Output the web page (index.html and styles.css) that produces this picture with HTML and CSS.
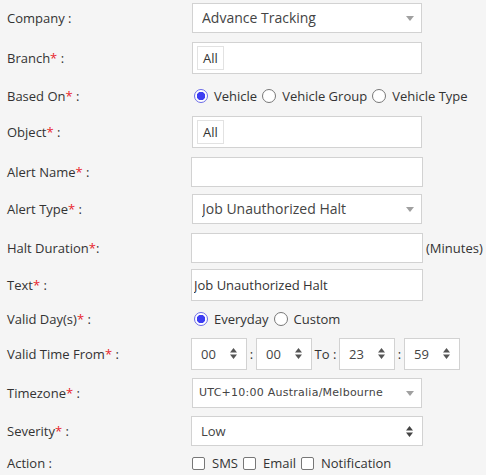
FILE: index.html
```html
<!DOCTYPE html>
<html lang="en">
<head>
    <meta charset="UTF-8">
    <meta name="viewport" content="width=device-width, initial-scale=1.0">
    <title>Alert Settings</title>
    <link rel="stylesheet" href="styles.css">
</head>
<body>

    <form class="alert-form">

        <label class="label">Company :</label>
        <div class="field">
            <span class="select">
                <select><option>Advance Tracking</option></select>
                <svg class="caret" width="8" height="5" viewBox="0 0 8 5"><path d="M0 0h8L4 5z"/></svg>
            </span>
        </div>

        <label class="label">Branch<span class="req">*</span> :</label>
        <div class="field">
            <div class="tags"><span class="tag">All</span></div>
        </div>

        <label class="label">Based On<span class="req">*</span> :</label>
        <div class="field options">
            <label><input type="radio" name="based" checked> Vehicle</label>
            <label><input type="radio" name="based"> Vehicle Group</label>
            <label><input type="radio" name="based"> Vehicle Type</label>
        </div>

        <label class="label">Object<span class="req">*</span> :</label>
        <div class="field">
            <div class="tags"><span class="tag">All</span></div>
        </div>

        <label class="label">Alert Name<span class="req">*</span> :</label>
        <div class="field">
            <input class="text" type="text">
        </div>

        <label class="label">Alert Type<span class="req">*</span> :</label>
        <div class="field">
            <span class="select">
                <select><option>Job Unauthorized Halt</option></select>
                <svg class="caret" width="8" height="5" viewBox="0 0 8 5"><path d="M0 0h8L4 5z"/></svg>
            </span>
        </div>

        <label class="label">Halt Duration<span class="req">*</span>:</label>
        <div class="field">
            <input class="text" type="text">
            <span class="unit">(Minutes)</span>
        </div>

        <label class="label">Text<span class="req">*</span> :</label>
        <div class="field">
            <input class="text plain" type="text" value="Job Unauthorized Halt">
        </div>

        <label class="label">Valid Day(s)<span class="req">*</span> :</label>
        <div class="field options">
            <label><input type="radio" name="days" checked> Everyday</label>
            <label><input type="radio" name="days"> Custom</label>
        </div>

        <label class="label">Valid Time From<span class="req">*</span> :</label>
        <div class="field time">
            <span class="spin">
                <select><option>00</option></select>
                <svg class="updown" width="7" height="11" viewBox="0 0 7 11"><path d="M0 4.5L3.5 0 7 4.5zM0 6.5h7L3.5 11z"/></svg>
            </span>
            <span class="sep">:</span>
            <span class="spin">
                <select><option>00</option></select>
                <svg class="updown" width="7" height="11" viewBox="0 0 7 11"><path d="M0 4.5L3.5 0 7 4.5zM0 6.5h7L3.5 11z"/></svg>
            </span>
            <span class="sep to">To :</span>
            <span class="spin">
                <select><option>23</option></select>
                <svg class="updown" width="7" height="11" viewBox="0 0 7 11"><path d="M0 4.5L3.5 0 7 4.5zM0 6.5h7L3.5 11z"/></svg>
            </span>
            <span class="sep">:</span>
            <span class="spin">
                <select><option>59</option></select>
                <svg class="updown" width="7" height="11" viewBox="0 0 7 11"><path d="M0 4.5L3.5 0 7 4.5zM0 6.5h7L3.5 11z"/></svg>
            </span>
        </div>

        <label class="label">Timezone<span class="req">*</span> :</label>
        <div class="field">
            <span class="select tz">
                <select><option>UTC+10:00 Australia/Melbourne</option></select>
                <svg class="caret" width="8" height="5" viewBox="0 0 8 5"><path d="M0 0h8L4 5z"/></svg>
            </span>
        </div>

        <label class="label">Severity<span class="req">*</span> :</label>
        <div class="field">
            <span class="select wide">
                <select><option>Low</option><option>Medium</option><option>High</option></select>
                <svg class="updown dark" width="7" height="11" viewBox="0 0 7 11"><path d="M0 4.5L3.5 0 7 4.5zM0 6.5h7L3.5 11z"/></svg>
            </span>
        </div>

        <label class="label">Action :</label>
        <div class="field options checks">
            <label><input type="checkbox"> SMS</label>
            <label><input type="checkbox"> Email</label>
            <label><input type="checkbox"> Notification</label>
        </div>

    </form>

</body>
</html>
```

FILE: styles.css
```css
body {
    margin: 0;
    padding: 0;
    background-color: #f5f5f5;
    font-family: 'Open Sans', 'Liberation Sans', sans-serif;
    font-size: 13px;
    color: #333;
}

/* two columns: labels on the left, controls on the right */
.alert-form {
    display: grid;
    grid-template-columns: 184px 1fr;
    grid-template-rows: 35px 45px 32px 40px 39px 35px 43px 31px 38px 31px 47px 30px 34px;
    align-items: center;
    padding-left: 7px;
}

.label {
    white-space: nowrap;
}

.req {
    color: #e8242c;
}

.field {
    display: flex;
    align-items: center;
}

/* text inputs */
.text {
    box-sizing: border-box;
    width: 232px;
    height: 30px;
    margin: 0;
    padding: 0 8px;
    border: 1px solid #d2d2d2;
    background: #fff;
    font-family: inherit;
    font-size: 13px;
    color: #333;
    outline: none;
}

.text.plain {
    height: 32px;
    padding: 0 2px;
}

.unit {
    margin-left: 3px;
}

/* tag box (multi select) */
.tags {
    box-sizing: border-box;
    width: 230px;
    height: 32px;
    margin-left: 1px;
    padding: 3px 4px;
    border: 1px solid #d2d2d2;
    background: #fff;
    display: flex;
    align-items: center;
}

.tag {
    box-sizing: border-box;
    height: 24px;
    padding: 0 5px;
    border: 1px solid #e2e2e2;
    line-height: 22px;
}

/* selects with drawn arrows */
.select,
.spin {
    position: relative;
    display: inline-block;
}

.select {
    margin-left: 1px;
}

.select select,
.spin select {
    box-sizing: border-box;
    -webkit-appearance: none;
    appearance: none;
    width: 230px;
    height: 30px;
    margin: 0;
    padding: 0 9px;
    border: 1px solid #d2d2d2;
    border-radius: 0;
    background: #fff;
    font-family: inherit;
    font-size: 14px;
    color: #444;
    outline: none;
}

.select.tz select {
    font-family: 'DejaVu Sans', sans-serif;
    font-size: 11px;
    letter-spacing: 0.25px;
    padding: 0 6px;
}

.select.wide {
    margin-left: 0;
}

.select.wide select {
    width: 232px;
    font-size: 13px;
}

.caret {
    position: absolute;
    right: 8px;
    top: 13px;
    fill: #a0a0a0;
    pointer-events: none;
}

.updown {
    position: absolute;
    right: 10px;
    top: 10px;
    fill: #555;
    pointer-events: none;
}

.updown.dark {
    fill: #444;
}

/* time pickers */
.spin select {
    width: 56px;
    height: 32px;
    font-size: 13px;
}

.sep {
    width: 9px;
    text-align: center;
}

.sep.to {
    width: 27px;
}

/* radio buttons and check boxes */
.options label {
    display: flex;
    align-items: center;
}

.options input {
    -webkit-appearance: none;
    appearance: none;
    box-sizing: border-box;
    width: 14px;
    height: 14px;
    margin: 0 6px 0 5px;
    border: 1px solid #777;
    border-radius: 50%;
    background: #fff;
}

.options label:first-child input {
    margin-left: 3px;
}

.options input:checked {
    border: 1px solid #6a6ae8;
    background: radial-gradient(circle, #3d3df2 0 4px, #fff 4.5px);
}

.checks input {
    width: 13px;
    height: 13px;
    border-radius: 2px;
    margin: 0 7px 0 5px;
}

.checks label:first-child input {
    margin-left: 1px;
}
```
